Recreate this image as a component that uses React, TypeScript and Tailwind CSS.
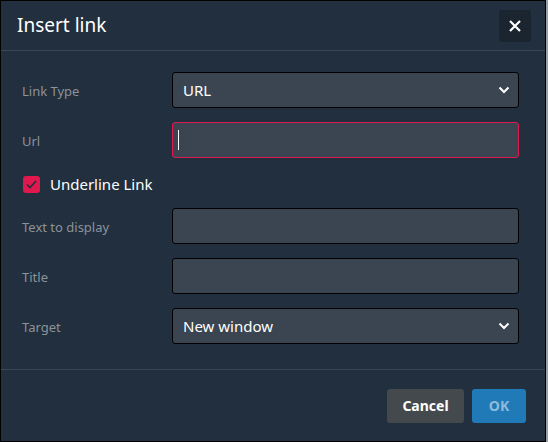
import React from "react";

const font = { fontFamily: '"Segoe UI", "Noto Sans", "Open Sans", sans-serif' };

function Chevron() {
  return (
    <svg width="12" height="8" viewBox="0 0 12 8" className="absolute right-[8px] top-1/2 -translate-y-1/2">
      <path d="M1.5 1.5 L6 6 L10.5 1.5" fill="none" stroke="#ffffff" strokeWidth="2" />
    </svg>
  );
}

function Row({ label, children }: { label: string; children: React.ReactNode }) {
  return (
    <div className="flex items-center h-[36px]">
      <div className="w-[150px] text-[13px] text-[#8c939a] pt-[3px]">{label}</div>
      {children}
    </div>
  );
}

function Field({ children, border = "border-black" }: { children?: React.ReactNode; border?: string }) {
  return (
    <div className={`relative w-[347px] h-[36px] rounded-[3px] border bg-[#3a4551] ${border} flex items-center px-[10px] text-[15px] text-white`}>
      {children}
    </div>
  );
}

export default function App() {
  return (
    <div className="w-[548px] h-[442px] bg-[#9aa0a6]" style={font}>
      <div className="w-[546px] h-[442px] bg-[#222f3e] border border-black flex flex-col">
        <div className="h-[49px] border-b border-[#3b4652] flex items-center justify-between pl-[16px] pr-[14px] box-content">
          <div className="text-[19px] text-white">Insert link</div>
          <div className="w-[32px] h-[32px] rounded-[3px] bg-[#1b2530] flex items-center justify-center mt-[1px]">
            <svg width="14" height="14" viewBox="0 0 14 14">
              <path d="M2 2 L12 12 M12 2 L2 12" stroke="#ffffff" strokeWidth="2.2" />
            </svg>
          </div>
        </div>
        <div className="flex flex-col pl-[21px] pt-[21px] pb-[25px] border-b border-[#3b4652]">
          <Row label="Link Type">
            <Field>
              URL
              <Chevron />
            </Field>
          </Row>
          <div className="mt-[14px]">
            <Row label="Url">
              <Field border="border-[#e0184d]">
                <div className="w-[1px] h-[20px] bg-white -ml-[5px]" />
              </Field>
            </Row>
          </div>
          <div className="mt-[16px] h-[20px] flex items-center">
            <div className="w-[17px] h-[17px] rounded-[3px] bg-[#e0184d] flex items-center justify-center ml-[1px] mt-[1px]">
              <svg width="11" height="9" viewBox="0 0 11 9">
                <path d="M1 4.5 L4 7.5 L10 1" fill="none" stroke="#222f3e" strokeWidth="1.6" />
              </svg>
            </div>
            <div className="ml-[10px] text-[15px] text-white">Underline Link</div>
          </div>
          <div className="mt-[14px]">
            <Row label="Text to display">
              <Field />
            </Row>
          </div>
          <div className="mt-[14px]">
            <Row label="Title">
              <Field />
            </Row>
          </div>
          <div className="mt-[14px]">
            <Row label="Target">
              <Field>
                New window
                <Chevron />
              </Field>
            </Row>
          </div>
        </div>
        <div className="flex-1 flex items-center justify-end pr-[19px] gap-[8px]">
          <div className="w-[77px] h-[34px] rounded-[3px] bg-[#44494d] text-white text-[14px] font-bold flex items-center justify-center">
            Cancel
          </div>
          <div className="w-[54px] h-[34px] rounded-[3px] bg-[#207ab7] text-[#8ebadb] text-[14px] font-bold flex items-center justify-center">
            OK
          </div>
        </div>
      </div>
    </div>
  );
}
